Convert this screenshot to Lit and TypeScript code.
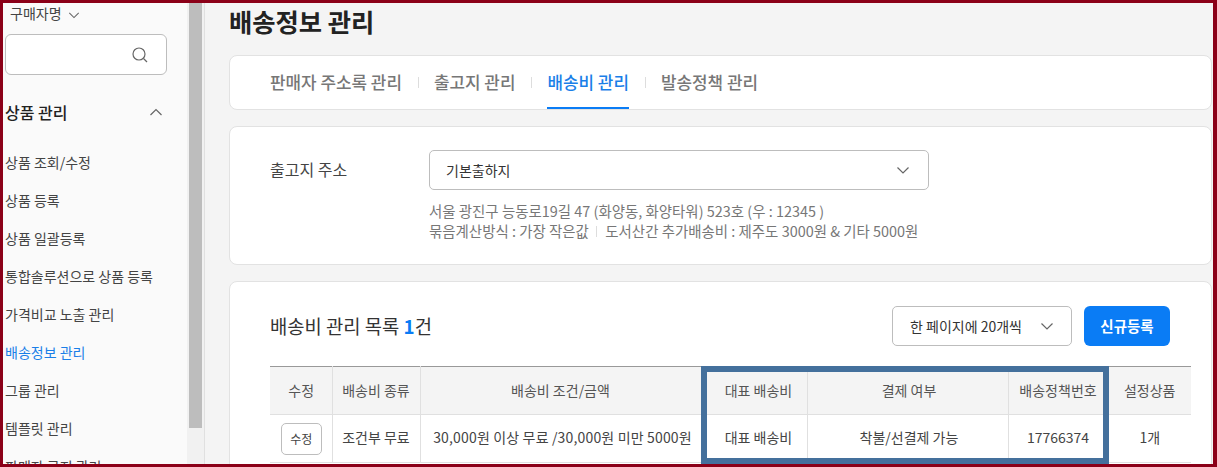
import { LitElement, html, css, svg } from "lit";
import { customElement } from "lit/decorators.js";

const chev = (up = false) => html`<svg class="chev" width="14" height="14" viewBox="0 0 14 14" fill="none" stroke="currentColor" stroke-width="1.2"><path d=${up ? "M1.5 10 L7 4.5 L12.5 10" : "M1.5 4.5 L7 10 L12.5 4.5"}></path></svg>`;

@customElement("app-root")
export class AppRoot extends LitElement {
  static styles = css`
    :host { display: block; width: 1217px; height: 467px; overflow: hidden; font-family: "Noto Sans CJK KR", "Noto Sans", sans-serif; color: #333; }
    .frame { box-sizing: border-box; width: 1217px; height: 467px; border: 3px solid #8b0018; border-right-width: 4px; display: flex; overflow: hidden; position: relative; background: #fff; }
    .side { width: 184px; flex: none; background: #fafafa; padding: 0 0 0 2px; box-sizing: border-box; overflow: hidden; }
    .buyer { display: flex; align-items: center; gap: 6px; height: 20px; padding-left: 5px; font-size: 14px; color: #444; }
    .buyer .chev { color: #666; width: 12px; height: 12px; margin-top: 3px; }
    .search { box-sizing: border-box; width: 162px; height: 41px; margin: 11px 0 0 0; border: 1px solid #bdbdbd; border-radius: 6px; background: #fff; display: flex; align-items: center; justify-content: flex-end; padding-right: 18px; }
    .group { display: flex; justify-content: space-between; align-items: center; margin-top: 25px; height: 24px; width: 161px; font-size: 16px; font-weight: 500; color: #222; padding-right: 3px; box-sizing: border-box; }
    .group .chev { color: #666; }
    .menu { list-style: none; margin: 19px 0 0; padding: 0; }
    .menu li { height: 38px; display: flex; align-items: center; font-size: 14px; color: #444; white-space: nowrap; }
    .menu li.on { color: #1a7fe8; }
    .scroll { width: 17px; flex: none; background: #f1f1f1; padding: 0 2px; box-sizing: border-box; }
    .thumb { height: 425px; background: #bdbdbd; }
    .main { flex: 1; min-width: 0; background: #f4f4f4; border-left: 1px solid #e0e0e0; padding: 0 0 0 24px; overflow: hidden; }
    h1 { margin: 0; font-size: 25.3px; line-height: 36px; height: 52px; font-weight: 700; color: #222; }
    .card { background: #fff; border: 1px solid #e2e2e2; border-radius: 8px; box-sizing: border-box; width: 983px; }
    .tabs { height: 55px; display: flex; padding-left: 40px; align-items: stretch; }
    .tab { display: flex; align-items: center; font-size: 16.9px; font-weight: 500; color: #777; padding-bottom: 3px; box-sizing: border-box; }
    .tab.on { color: #1a7fe8; box-shadow: inset 0 -2px 0 #0a7cf5; }
    .sep { width: 1px; height: 11px; background: #ddd; align-self: center; margin: 0 15px 0 16px; }
    .addr { margin-top: 16px; height: 139px; padding: 23px 0 0 40px; box-sizing: border-box; display: flex; }
    .lab { width: 159px; flex: none; font-size: 16px; line-height: 38px; color: #444; }
    .sel { box-sizing: border-box; display: flex; align-items: center; justify-content: space-between; border: 1px solid #bdbdbd; border-radius: 5px; background: #fff; font-size: 14px; color: #333; }
    .sel .chev { color: #666; }
    .sel.wide { width: 500px; height: 40px; padding: 0 18px 0 16px; }
    .info { margin-top: 11px; font-size: 14.45px; line-height: 20px; color: #777; white-space: nowrap; }
    .info i { display: inline-block; width: 1px; height: 11px; background: #ddd; margin: 0 5px 0 4px; }
    .list { margin-top: 16px; height: 200px; padding: 24px 20px 0 40px; box-sizing: border-box; }
    .head { display: flex; align-items: center; height: 40px; padding-right: 21px; }
    .title { font-size: 18.8px; font-weight: 400; color: #333; flex: 1; padding-bottom: 2px; }
    .title b { color: #0a7cf5; font-weight: 700; }
    .sel.small { width: 180px; height: 40px; padding: 0 17px; color: #333; font-size: 14px; }
    .btn { box-sizing: border-box; margin-left: 12px; width: 86px; height: 40px; border: 0; border-radius: 6px; background: #0a7cf5; color: #fff; font: 700 14.5px "Noto Sans CJK KR", sans-serif; display: flex; align-items: center; justify-content: center; padding-bottom: 2px; }
    table { border-collapse: collapse; table-layout: fixed; width: 921px; margin-top: 20px; border-top: 1px solid #999; font-size: 14px; color: #444; }
    th { background: #f4f4f4; font-weight: 400; color: #555; height: 48px; padding: 0 0 2px; box-sizing: border-box; border-bottom: 1px solid #e0e0e0; border-left: 1px solid #e0e0e0; }
    td { height: 48px; padding: 0 0 3px; box-sizing: border-box; text-align: center; border-bottom: 1px solid #e0e0e0; border-left: 1px solid #e0e0e0; white-space: nowrap; }
    th:first-child, td:first-child { border-left: 0; padding-left: 1px; }
    .rep { padding-left: 9px; }
    .pay { padding-left: 3px; }
    .amt { letter-spacing: 0.16px; padding-left: 4px; }
    .edit { box-sizing: border-box; width: 41px; height: 32px; margin-top: 3px; display: inline-flex; align-items: center; justify-content: center; border: 1px solid #bdbdbd; border-radius: 5px; background: #fff; font-size: 12px; color: #444; }
    .mark { position: absolute; left: 698px; top: 363px; width: 408px; height: 98px; box-sizing: border-box; border: 6px solid #44709c; pointer-events: none; }
  `;

  render() {
    const items = ["상품 조회/수정", "상품 등록", "상품 일괄등록", "통합솔루션으로 상품 등록", "가격비교 노출 관리", "배송정보 관리", "그룹 관리", "템플릿 관리", "판매자 공지 관리"];
    return html`<div class="frame">
      <aside class="side">
        <div class="buyer">구매자명 ${chev()}</div>
        <div class="search"><svg width="16" height="16" viewBox="0 0 16 16" fill="none" stroke="#666" stroke-width="1.2">${svg`<circle cx="7" cy="7" r="6"></circle><path d="M11.5 11.5 L15 15"></path>`}</svg></div>
        <div class="group">상품 관리 ${chev(true)}</div>
        <ul class="menu">${items.map((t) => html`<li class=${t === "배송정보 관리" ? "on" : ""}>${t}</li>`)}</ul>
      </aside>
      <div class="scroll"><div class="thumb"></div></div>
      <main class="main">
        <h1>배송정보 관리</h1>
        <section class="card tabs">
          <div class="tab">판매자 주소록 관리</div><span class="sep"></span>
          <div class="tab">출고지 관리</div><span class="sep"></span>
          <div class="tab on">배송비 관리</div><span class="sep"></span>
          <div class="tab">발송정책 관리</div>
        </section>
        <section class="card addr">
          <div class="lab">출고지 주소</div>
          <div>
            <div class="sel wide">기본출하지 ${chev()}</div>
            <div class="info">서울 광진구 능동로19길 47 (화양동, 화양타워) 523호 (우 : 12345 )<br />묶음계산방식 : 가장 작은값 <i></i> 도서산간 추가배송비 : 제주도 3000원 &amp; 기타 5000원</div>
          </div>
        </section>
        <section class="card list">
          <div class="head">
            <div class="title">배송비 관리 목록 <b>1</b>건</div>
            <div class="sel small">한 페이지에 20개씩 ${chev()}</div>
            <div class="btn">신규등록</div>
          </div>
          <table>
            <colgroup><col style="width:62px" /><col style="width:88px" /><col style="width:281px" /><col style="width:106px" /><col style="width:201px" /><col style="width:100px" /><col style="width:83px" /></colgroup>
            <tr><th>수정</th><th>배송비 종류</th><th>배송비 조건/금액</th><th class="rep">대표 배송비</th><th class="pay">결제 여부</th><th>배송정책번호</th><th>설정상품</th></tr>
            <tr><td><span class="edit">수정</span></td><td>조건부 무료</td><td class="amt">30,000원 이상 무료 /30,000원 미만 5000원</td><td class="rep">대표 배송비</td><td class="pay">착불/선결제 가능</td><td>17766374</td><td>1개</td></tr>
          </table>
        </section>
      </main>
      <div class="mark"></div>
    </div>`;
  }
}
